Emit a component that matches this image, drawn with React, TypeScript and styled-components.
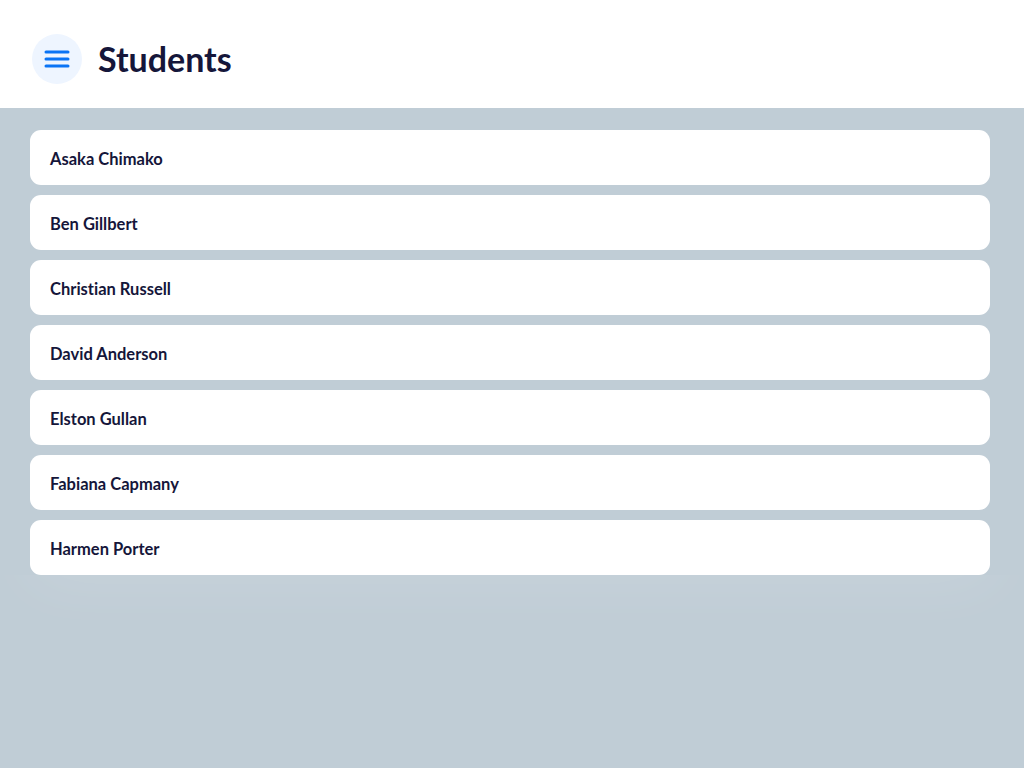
import styled, { createGlobalStyle } from 'styled-components'

const students = [
    'Asaka Chimako',
    'Ben Gillbert',
    'Christian Russell',
    'David Anderson',
    'Elston Gullan',
    'Fabiana Capmany',
    'Harmen Porter',
]

const GlobalStyle = createGlobalStyle`
    html, body {
        margin: 0;
        padding: 0;
        height: 100%;
    }
    body {
        background: #c0cdd6;
        font-family: Lato, "Noto Sans", sans-serif;
        font-variant-ligatures: no-common-ligatures;
        color: #15163a;
    }
`

export default function App() {
    return (
        <>
            <GlobalStyle/>
            <Page>
                <Header>
                    <MenuButton aria-label="Menu">
                        <svg width="26" height="18" viewBox="0 0 26 18">
                            <path d="M2 2h22M2 9h22M2 16h22" stroke="#0a74f5" strokeWidth="3"
                                  strokeLinecap="round" fill="none"/>
                        </svg>
                    </MenuButton>
                    <Title>Students</Title>
                </Header>
                <List>
                    {students.map(name => (
                        <Card key={name}>{name}</Card>
                    ))}
                </List>
            </Page>
        </>
    )
}

const Page = styled.div`
    min-height: 768px;
    background: #c0cdd6;
`

const Header = styled.header`
    height: 108px;
    box-sizing: border-box;
    background: #ffffff;
    display: flex;
    align-items: center;
    gap: 16px;
    padding: 10px 32px 0;
`

const MenuButton = styled.button`
    width: 50px;
    height: 50px;
    border-radius: 50%;
    border: none;
    background: #eef5ff;
    display: flex;
    align-items: center;
    justify-content: center;
    padding: 0;
`

const Title = styled.h1`
    margin: 0 0 2px;
    font-size: 34px;
    font-weight: 700;
    color: #15163a;
`

const List = styled.div`
    display: flex;
    flex-direction: column;
    gap: 10px;
    padding: 22px 34px 0 30px;
    box-shadow: 0 40px 60px -30px rgba(255, 255, 255, 0.12);
`

const Card = styled.div`
    height: 55px;
    box-sizing: border-box;
    background: #ffffff;
    border-radius: 11px;
    display: flex;
    align-items: center;
    padding: 2px 20px 0;
    font-size: 16.5px;
    font-weight: 700;
    color: #15163a;
`
